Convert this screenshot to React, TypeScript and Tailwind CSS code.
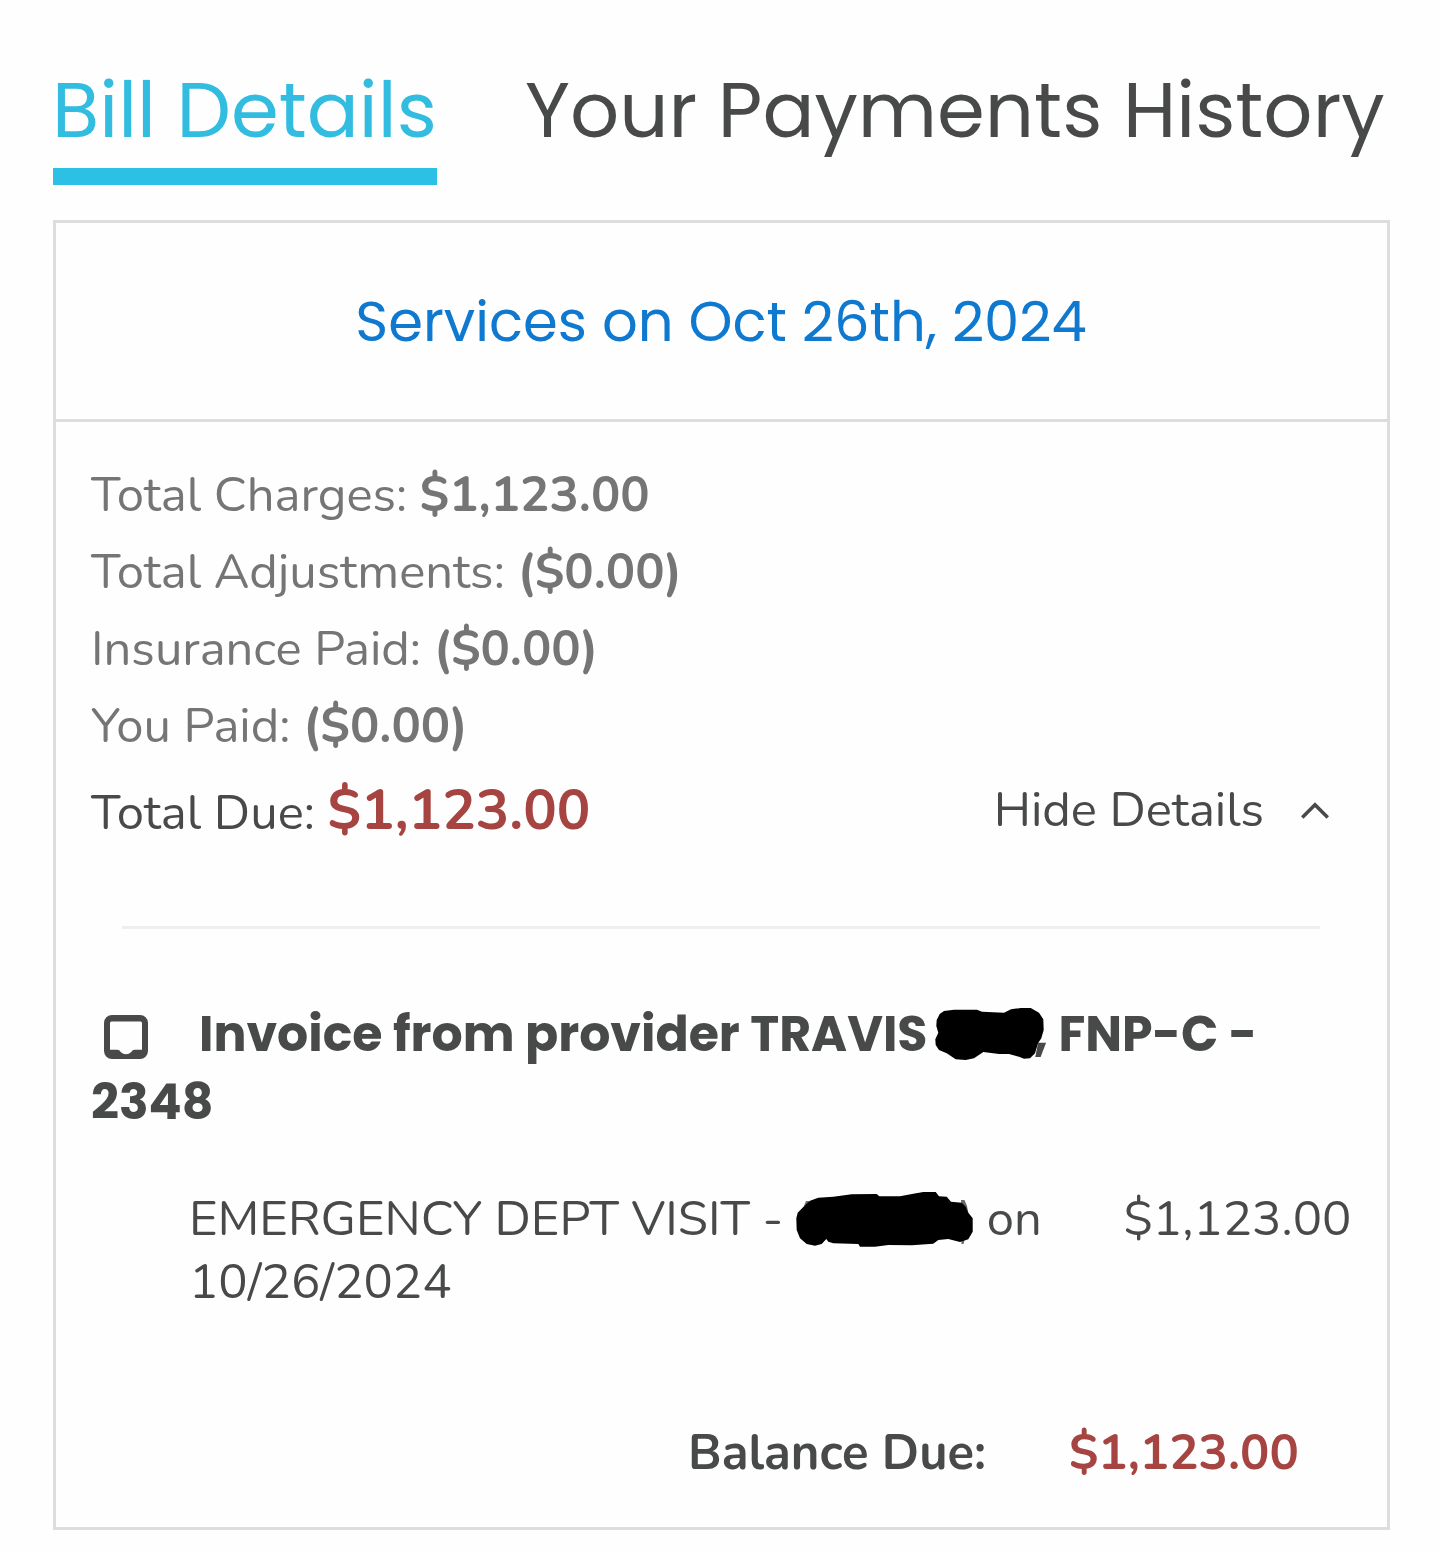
import React from "react";

function Amount({ label, value }: { label: string; value: string }) {
  return (
    <p className="h-[77px] whitespace-nowrap text-[48.950px] leading-[77px] text-[#757575]">
      {label} <b className="font-bold">{value}</b>
    </p>
  );
}

export default function App() {
  return (
    <main className="flex h-[1553px] w-[1440px] flex-col bg-[#fefefe] pl-[53px] font-[Nunito,Lato,sans-serif] text-[#484a49]">
      <nav className="flex h-[185px] gap-[89px] whitespace-nowrap pt-[52px] font-[Poppins,Inter,sans-serif] text-[77px] leading-[116px]">
        <div className="h-[133px] w-[384px] border-b-[17px] border-[#2cc0e4] text-[#32bde0]">
          <span className="-ml-px">Bill Details</span>
        </div>
        <div className="-ml-px">Your Payments History</div>
      </nav>

      <section className="mt-[35px] flex h-[1310px] w-[1337px] flex-col border-[3px] border-[#dcdddd]">
        <h1 className="flex h-[199px] items-center justify-center border-b-[3px] border-[#dcdddd] pr-px pt-[2px] font-[Poppins,Inter,sans-serif] text-[56px] text-[#0f78cf]">
          Services on Oct 26th, 2024
        </h1>

        <div className="flex flex-col pl-[35px] pt-[35px]">
          <Amount label="Total Charges:" value="$1,123.00" />
          <Amount label="Total Adjustments:" value="($0.00)" />
          <Amount label="Insurance Paid:" value="($0.00)" />
          <Amount label="You Paid:" value="($0.00)" />
          <div className="flex h-[90px] items-baseline justify-between pr-[58px] pt-px text-[48.950px] leading-[90px]">
            <p>
              Total Due: <b className="text-[56px] font-bold text-[#a64442]">$1,123.00</b>
            </p>
            <p className="flex -translate-y-[3px] items-center gap-[37px]">
              Hide Details
              <svg className="h-[17px] w-[28px]" viewBox="0 0 28 17" fill="none" stroke="currentColor" strokeWidth="3.6">
                <path d="M1.2 15.5 14 2.7l12.8 12.8" />
              </svg>
            </p>
          </div>
        </div>

        <hr className="ml-[66px] mt-[71px] w-[1198px] border-t-[3px] border-[#eeeeee]" />

        <h2 className="mt-[71px] pl-[35px] font-[Poppins,Inter,sans-serif] text-[48.980px] font-bold leading-[68px]">
          <div className="flex h-[68px] items-center whitespace-nowrap">
            <svg className="ml-[13px] mr-[51px] mt-[5px] size-[44px]" viewBox="0 0 44 44">
              <path
                fill="currentColor"
                fillRule="evenodd"
                d="M8 0h28a8 8 0 0 1 8 8v28a8 8 0 0 1-8 8H8a8 8 0 0 1-8-8V8a8 8 0 0 1 8-8ZM7.500 6.500h29q1.500 0 1.500 1.500v26.800h-7.500c-1.500 0-2 .8-3.200 2.200q-2.300 2.300-5.300 2.300t-5.300-2.300c-1.200-1.400-1.700-2.200-3.200-2.200H6V8q0-1.500 1.500-1.500Z"
              />
            </svg>
            <span>Invoice from provider TRAVIS</span>
            <svg className="relative z-10 ml-[8px] h-[52px] w-[109px] fill-black" viewBox="936 1008 109 52">
              <path d="M940.700 1014 945 1011 955 1009.700H978L983 1011.700 1005 1012.700 1012 1009.300 1021.700 1008H1031.700L1040 1012.700 1044.300 1019.300 1044.700 1030 1042.300 1038.300 1039 1043.300 1036 1053.300 1031 1058.300 1025 1058.700 1020 1056.700 1010 1054H1000L984.300 1052 975 1058.300 966.700 1060 956.700 1059.300 947.700 1053.300 940 1050 936.700 1045 936.300 1039.300 939.300 1032.700 937.300 1026 937.700 1020Z" />
            </svg>
            <span className="-ml-[10.500px]">, FNP-C -</span>
          </div>
          <div className="h-[66px]">2348</div>
        </h2>

        <div className="mt-[54px] flex pl-[133px] text-[48.950px] leading-[63px]">
          <div className="w-[934.500px]">
            <div className="flex h-[63px] items-center whitespace-nowrap">
              <span>EMERGENCY DEPT VISIT -</span>
              <svg className="ml-[12.500px] mr-[14px] h-[55px] w-[177px] fill-black" viewBox="796 1192 177 55">
                <path d="M804 1206 806 1201H809V1206ZM961 1200H964.500L967 1206 968.500 1214H962ZM961.500 1240H964.500L963.500 1244H961.500Z" fill="#666867" />
                <path d="M796.300 1218.300 797.700 1212.700 804.300 1206 810 1200.700 818.300 1197.700 833.300 1196.700 851.700 1194.300 876.700 1194 879.300 1196.300H900L913.300 1193.700 923.300 1192H935.700L939 1196.300 946.700 1196.700 951 1201.700 961.700 1202.700 965.700 1206.700 968.300 1212.700 972.700 1218.300V1231.700L968.300 1239.300 960 1242 948.300 1239 938.300 1240 933.300 1243.700 911.700 1245.300 888.300 1245 875 1246.700H860L858.300 1244 833.300 1243.300 828.300 1241.700 826.300 1239 821.700 1244 815 1245.700 806.700 1244 800 1238.300 796.700 1230Z" />
              </svg>
              <span>on</span>
            </div>
            <div>10/26/2024</div>
          </div>
          <div>$1,123.00</div>
        </div>

        <div className="mt-[106px] flex whitespace-nowrap pl-[632px] text-[48.950px] font-bold leading-[66px]">
          <span className="w-[381px]">Balance Due:</span>
          <span className="text-[#a64442]">$1,123.00</span>
        </div>
      </section>
    </main>
  );
}
